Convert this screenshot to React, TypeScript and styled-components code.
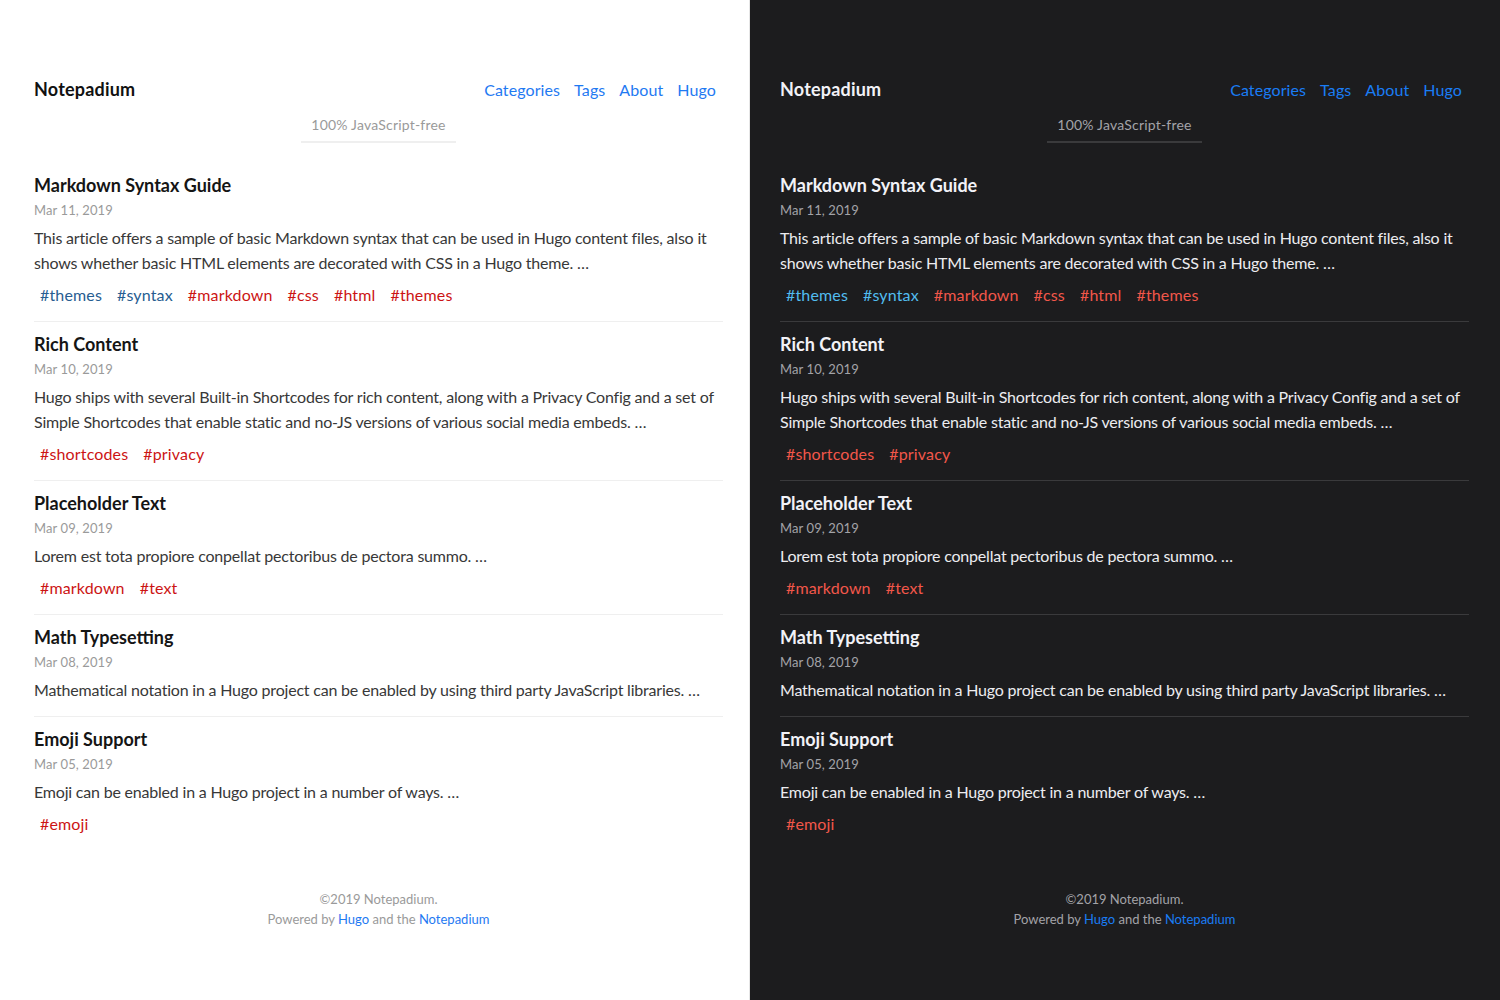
import React from "react";
import styled, { createGlobalStyle, ThemeProvider } from "styled-components";

type Palette = {
  bg: string;
  edge: string;
  brand: string;
  title: string;
  text: string;
  muted: string;
  rule: string;
  link: string;
  tagBlue: string;
  tagRed: string;
  padLeft: number;
  padRight: number;
};

const light: Palette = {
  bg: "#ffffff",
  edge: "#e6e6e6",
  brand: "#111111",
  title: "#151515",
  text: "#383838",
  muted: "#9a9a9a",
  rule: "#efefef",
  link: "#1f7af2",
  tagBlue: "#275d91",
  tagRed: "#cc1414",
  padLeft: 34,
  padRight: 26,
};

const dark: Palette = {
  bg: "#1c1c1e",
  edge: "#1c1c1e",
  brand: "#f2f2f7",
  title: "#f2f2f7",
  text: "#ececf0",
  muted: "#a3a3a8",
  rule: "#3a3a3c",
  link: "#1a7cf5",
  tagBlue: "#52bdf0",
  tagRed: "#f2574a",
  padLeft: 30,
  padRight: 30,
};

const Global = createGlobalStyle`
  html, body { margin: 0; padding: 0; background: #fff; }
  body { font-family: Lato, "Open Sans", sans-serif; }
  * { box-sizing: border-box; }
`;

const Page = styled.div`
  display: grid;
  grid-template-columns: 750px 750px;
  width: 1500px;
  height: 1000px;
  overflow: hidden;
`;

const Panel = styled.div<{ $p: Palette }>`
  background: ${(p) => p.$p.bg};
  border-right: 1px solid ${(p) => p.$p.edge};
  padding: 77px ${(p) => p.$p.padRight}px 0 ${(p) => p.$p.padLeft}px;
  font-family: Lato, "Open Sans", sans-serif;
`;

const HeaderRow = styled.header`
  display: flex;
  justify-content: space-between;
  align-items: center;
  height: 24px;
`;

const Brand = styled.a<{ $p: Palette }>`
  font-size: 18px;
  font-weight: 700;
  line-height: 24px;
  letter-spacing: 0.2px;
  color: ${(p) => p.$p.brand};
  text-decoration: none;
`;

const Nav = styled.nav`
  display: flex;
  align-items: center;
  margin-top: 2px;
`;

const NavLink = styled.a<{ $p: Palette }>`
  font-size: 16px;
  line-height: 24px;
  padding: 0 7px;
  letter-spacing: 0.1px;
  color: ${(p) => p.$p.link};
  text-decoration: none;
`;

const TaglineWrap = styled.div`
  display: flex;
  justify-content: center;
  margin-top: 14px;
`;

const Tagline = styled.div<{ $p: Palette }>`
  font-size: 14px;
  line-height: 20px;
  letter-spacing: 0.2px;
  padding: 0 10px 6px;
  color: ${(p) => p.$p.muted};
  border-bottom: 2px solid ${(p) => p.$p.rule};
`;

const List = styled.main`
  margin-top: 20px;
`;

const Article = styled.article<{ $p: Palette }>`
  padding: 10px 0 14.5px;
  border-bottom: 1px solid ${(p) => p.$p.rule};
  &:last-child {
    border-bottom: none;
  }
`;

const Title = styled.h2<{ $p: Palette }>`
  margin: 0;
  font-size: 18px;
  font-weight: 700;
  line-height: 24px;
  color: ${(p) => p.$p.title};
`;

const DateLine = styled.div<{ $p: Palette }>`
  margin-top: 3px;
  font-size: 13px;
  line-height: 20px;
  letter-spacing: 0.1px;
  color: ${(p) => p.$p.muted};
`;

const Summary = styled.p<{ $p: Palette }>`
  margin: 4.5px 0 0;
  font-size: 16px;
  line-height: 25px;
  letter-spacing: -0.2px;
  color: ${(p) => p.$p.text};
`;

const Tags = styled.div`
  display: flex;
  flex-wrap: wrap;
  gap: 3px;
  margin-top: 7px;
`;

const Tag = styled.a<{ $color: string }>`
  font-size: 16px;
  line-height: 25px;
  padding: 0 6px;
  letter-spacing: 0.15px;
  color: ${(p) => p.$color};
  text-decoration: none;
`;

const Footer = styled.footer<{ $p: Palette }>`
  margin-top: 39px;
  text-align: center;
  font-size: 13px;
  line-height: 20px;
  color: ${(p) => p.$p.muted};
`;

const FooterLink = styled.a<{ $p: Palette }>`
  color: ${(p) => p.$p.link};
  text-decoration: none;
`;

type Post = {
  title: string;
  date: string;
  summary: string;
  tags: { name: string; kind: "blue" | "red" }[];
};

const posts: Post[] = [
  {
    title: "Markdown Syntax Guide",
    date: "Mar 11, 2019",
    summary:
      "This article offers a sample of basic Markdown syntax that can be used in Hugo content files, also it shows whether basic HTML elements are decorated with CSS in a Hugo theme. …",
    tags: [
      { name: "themes", kind: "blue" },
      { name: "syntax", kind: "blue" },
      { name: "markdown", kind: "red" },
      { name: "css", kind: "red" },
      { name: "html", kind: "red" },
      { name: "themes", kind: "red" },
    ],
  },
  {
    title: "Rich Content",
    date: "Mar 10, 2019",
    summary:
      "Hugo ships with several Built-in Shortcodes for rich content, along with a Privacy Config and a set of Simple Shortcodes that enable static and no-JS versions of various social media embeds. …",
    tags: [
      { name: "shortcodes", kind: "red" },
      { name: "privacy", kind: "red" },
    ],
  },
  {
    title: "Placeholder Text",
    date: "Mar 09, 2019",
    summary: "Lorem est tota propiore conpellat pectoribus de pectora summo. …",
    tags: [
      { name: "markdown", kind: "red" },
      { name: "text", kind: "red" },
    ],
  },
  {
    title: "Math Typesetting",
    date: "Mar 08, 2019",
    summary:
      "Mathematical notation in a Hugo project can be enabled by using third party JavaScript libraries. …",
    tags: [],
  },
  {
    title: "Emoji Support",
    date: "Mar 05, 2019",
    summary: "Emoji can be enabled in a Hugo project in a number of ways. …",
    tags: [{ name: "emoji", kind: "red" }],
  },
];

const Site: React.FC<{ p: Palette }> = ({ p }) => (
  <Panel $p={p}>
    <HeaderRow>
      <Brand $p={p} href="#">
        Notepadium
      </Brand>
      <Nav>
        {["Categories", "Tags", "About", "Hugo"].map((n) => (
          <NavLink key={n} $p={p} href="#">
            {n}
          </NavLink>
        ))}
      </Nav>
    </HeaderRow>
    <TaglineWrap>
      <Tagline $p={p}>100% JavaScript-free</Tagline>
    </TaglineWrap>
    <List>
      {posts.map((post) => (
        <Article key={post.title} $p={p}>
          <Title $p={p}>{post.title}</Title>
          <DateLine $p={p}>{post.date}</DateLine>
          <Summary $p={p}>{post.summary}</Summary>
          {post.tags.length > 0 && (
            <Tags>
              {post.tags.map((t, i) => (
                <Tag
                  key={i}
                  href="#"
                  $color={t.kind === "blue" ? p.tagBlue : p.tagRed}
                >
                  #{t.name}
                </Tag>
              ))}
            </Tags>
          )}
        </Article>
      ))}
    </List>
    <Footer $p={p}>
      <div>©2019 Notepadium.</div>
      <div>
        Powered by <FooterLink $p={p} href="#">Hugo</FooterLink> and the{" "}
        <FooterLink $p={p} href="#">Notepadium</FooterLink>
      </div>
    </Footer>
  </Panel>
);

export default function App() {
  return (
    <ThemeProvider theme={{}}>
      <Global />
      <Page>
        <Site p={light} />
        <Site p={dark} />
      </Page>
    </ThemeProvider>
  );
}
